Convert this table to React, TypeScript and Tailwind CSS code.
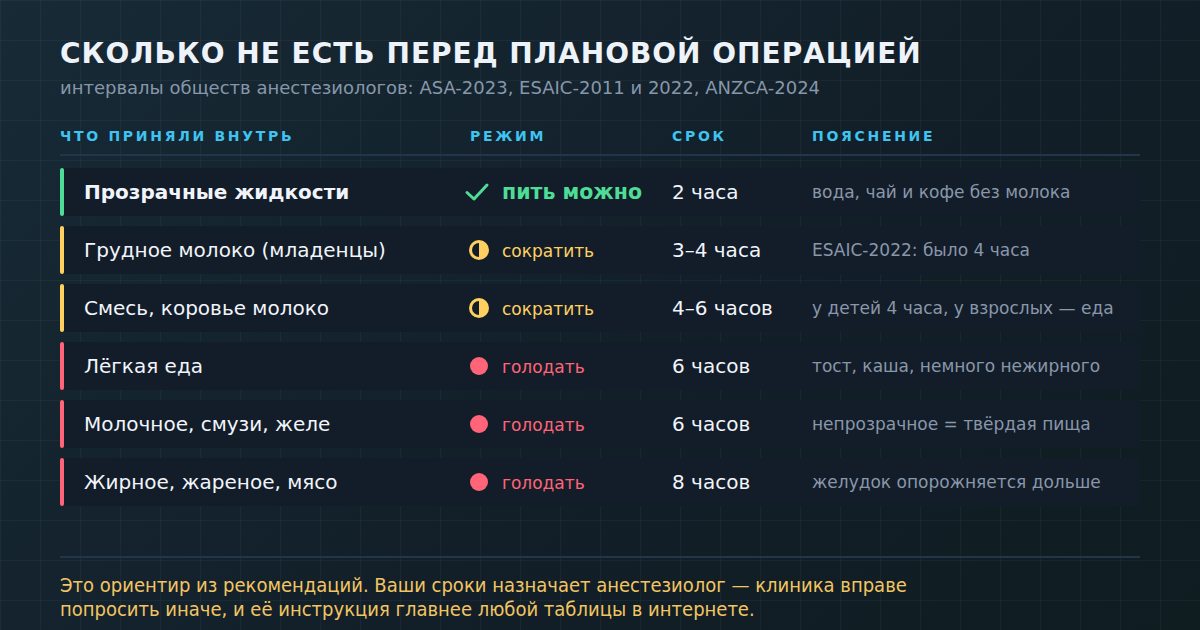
import React from "react"

type Mode = "ok" | "cut" | "no"

interface Row {
  name: string
  mode: Mode
  time: string
  note: string
}

const rows: Row[] = [
  { name: "Прозрачные жидкости", mode: "ok", time: "2 часа", note: "вода, чай и кофе без молока" },
  { name: "Грудное молоко (младенцы)", mode: "cut", time: "3–4 часа", note: "ESAIC-2022: было 4 часа" },
  { name: "Смесь, коровье молоко", mode: "cut", time: "4–6 часов", note: "у детей 4 часа, у взрослых — еда" },
  { name: "Лёгкая еда", mode: "no", time: "6 часов", note: "тост, каша, немного нежирного" },
  { name: "Молочное, смузи, желе", mode: "no", time: "6 часов", note: "непрозрачное = твёрдая пища" },
  { name: "Жирное, жареное, мясо", mode: "no", time: "8 часов", note: "желудок опорожняется дольше" },
]

const barColor: Record<Mode, string> = {
  ok: "bg-[#4fdc96]",
  cut: "bg-[#ffd060]",
  no: "bg-[#ff6478]",
}

function ModeIcon({ mode }: { mode: Mode }) {
  if (mode === "ok") {
    return (
      <svg width="26" height="22" viewBox="0 0 26 22" className="-ml-1">
        <path d="M3 11.5 L10 18 L23 4" fill="none" stroke="#4fdc96" strokeWidth="3" strokeLinecap="round" strokeLinejoin="round" />
      </svg>
    )
  }
  if (mode === "cut") {
    return (
      <svg width="22" height="22" viewBox="0 0 22 22">
        <circle cx="11" cy="11" r="10" fill="#ffd060" />
        <path d="M11 4 A7 7 0 0 0 11 18 Z" fill="#131d29" />
      </svg>
    )
  }
  return (
    <svg width="22" height="22" viewBox="0 0 22 22">
      <circle cx="11" cy="11" r="9" fill="#ff6478" />
    </svg>
  )
}

const modeText: Record<Mode, string> = {
  ok: "пить можно",
  cut: "сократить",
  no: "голодать",
}

const modeClass: Record<Mode, string> = {
  ok: "text-[#4fdc96] font-bold text-[20.5px]",
  cut: "text-[#ffd060] text-[17px] pt-[3px]",
  no: "text-[#ff6478] text-[17px] pt-[3px]",
}

export default function App() {
  return (
    <div
      className="relative w-[1200px] h-[630px] overflow-hidden bg-[linear-gradient(135deg,#172a36_0%,#121f29_55%,#0f1c20_100%)] text-[#f1f5fb]"
      style={{ fontFamily: '"DejaVu Sans", "Noto Sans", sans-serif' }}
    >
      {/* background grid */}
      <div className="absolute inset-0 bg-[linear-gradient(rgba(255,255,255,0.035)_1px,transparent_1px),linear-gradient(90deg,rgba(255,255,255,0.035)_1px,transparent_1px)] bg-[size:40px_40px]" />

      <div className="relative px-[60px] pt-[36px]">
        <h1 className="text-[28px] leading-[36px] font-bold tracking-[1px] text-[#eef3fa]">
          СКОЛЬКО НЕ ЕСТЬ ПЕРЕД ПЛАНОВОЙ ОПЕРАЦИЕЙ
        </h1>
        <p className="mt-[4px] text-[18px] leading-[24px] text-[#8797aa]">
          интервалы обществ анестезиологов: ASA-2023, ESAIC-2011 и 2022, ANZCA-2024
        </p>

        <div className="mt-[27px] grid grid-cols-[410px_202px_140px_1fr] pb-[9px] border-b-2 border-[#22364b] text-[14px] leading-[18px] font-bold tracking-[2.7px] text-[#3fc4f2]">
          <div>ЧТО ПРИНЯЛИ ВНУТРЬ</div>
          <div>РЕЖИМ</div>
          <div>СРОК</div>
          <div>ПОЯСНЕНИЕ</div>
        </div>

        <div className="mt-[12px] flex flex-col gap-[10px]">
          {rows.map((r, i) => (
            <div key={r.name} className="grid grid-cols-[4px_404px_204px_140px_1fr] h-[48px] items-center bg-[#131d29]">
              <div className={`h-full w-[4px] rounded-full ${barColor[r.mode]}`} />
              <div className={`pl-[20px] text-[20px] ${i === 0 ? "font-bold" : ""} text-[#f1f5fb]`}>{r.name}</div>
              <div className="flex items-center gap-[12px]">
                <ModeIcon mode={r.mode} />
                <span className={modeClass[r.mode]}>{modeText[r.mode]}</span>
              </div>
              <div className="text-[20px] text-[#f1f5fb]">{r.time}</div>
              <div className="text-[17px] pt-[2px] text-[#8997a9]">{r.note}</div>
            </div>
          ))}
        </div>

        <div className="mt-[50px] border-t-2 border-[#22364b] pt-[15px]">
          <p
            className="text-[20px] leading-[24px] text-[#f3c562]"
            style={{ fontFamily: '"DejaVu Sans Condensed", "DejaVu Sans", sans-serif', fontStretch: "condensed" }}
          >
            Это ориентир из рекомендаций. Ваши сроки назначает анестезиолог — клиника вправе
            <br />
            попросить иначе, и её инструкция главнее любой таблицы в интернете.
          </p>
        </div>
      </div>
    </div>
  )
}
